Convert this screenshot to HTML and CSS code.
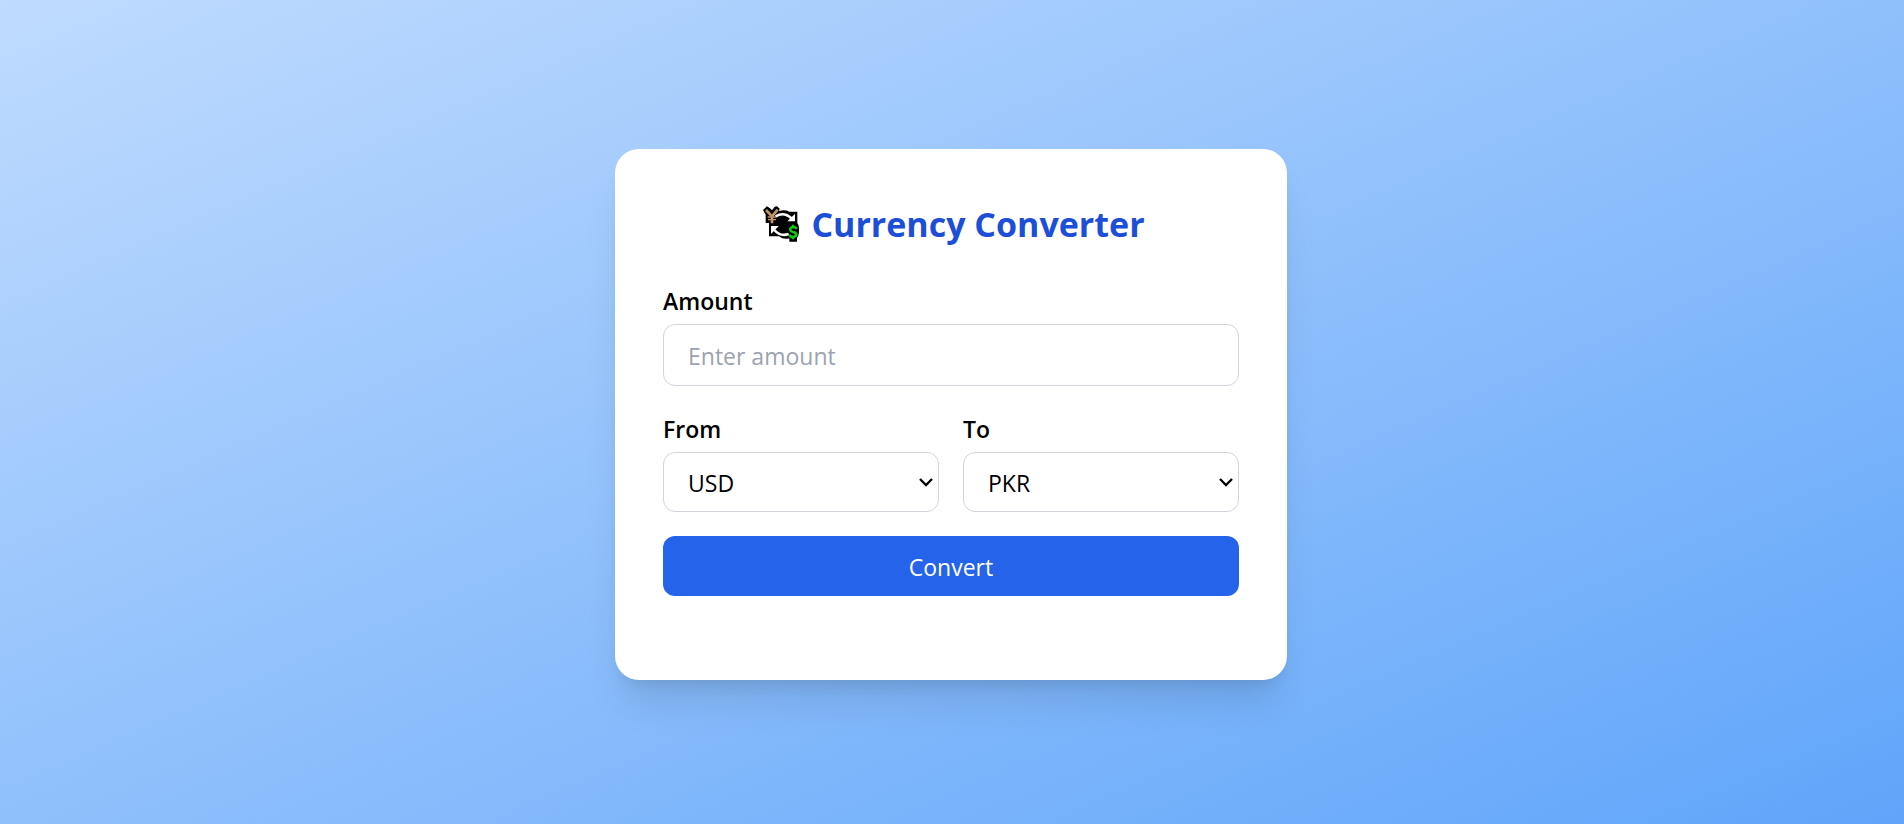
FILE: index.html
```html
<!DOCTYPE html>
<html lang="en">
<head>
<meta charset="utf-8">
<meta name="viewport" content="width=device-width, initial-scale=1">
<title>Currency Converter</title>
<link rel="stylesheet" href="styles.css">
</head>
<body class="page">
<main class="card">
  <header class="card-header">
    <svg class="logo" viewBox="42 46 108 108" aria-hidden="true">
      <path fill="#000" d="M42 58 54 47 62 52 69 59 77 48 84 47 92 54 90 61Q108 56 121 63H145V97Q151 104 150 119 150 135 144 142V153H121V143Q104 148 90 137H60V97H50V72Z"/>
      <path fill="none" stroke="#c1946a" stroke-width="8" d="M51 58 69 77 86 57M69 75V98"/>
      <path fill="none" stroke="#c1946a" stroke-width="4" d="M56 79H82M57 87H81"/>
      <path fill="none" stroke="#fff" stroke-width="8" d="M80 77Q105 62 127 83"/>
      <path fill="#fff" d="M138 69V92H115Z"/>
      <path fill="none" stroke="#fff" stroke-width="8" d="M76 118Q94 139 119 130"/>
      <path fill="#fff" d="M66 106H89L66 130Z"/>
      <path fill="none" stroke="#13c813" stroke-width="8" d="M143 115Q140 109 132 109 123 110 124 117 125 122 132 124 142 126 142 132 140 139 132 139 124 139 121 132"/>
      <path fill="none" stroke="#13c813" stroke-width="7" d="M132 102V110M132 138V146"/>
    </svg>
    <h1 class="title">Currency Converter</h1>
  </header>
  <form class="form">
    <div class="field">
      <label class="label" for="amount">Amount</label>
      <input class="control amount" id="amount" type="text" inputmode="decimal" placeholder="Enter amount">
    </div>
    <div class="row">
      <div class="field">
        <label class="label" for="from">From</label>
        <select class="control select" id="from"><option>USD</option><option>PKR</option></select>
      </div>
      <div class="field">
        <label class="label" for="to">To</label>
        <select class="control select" id="to"><option>PKR</option><option>USD</option></select>
      </div>
    </div>
    <button class="submit" type="button">Convert</button>
  </form>
</main>
</body>
</html>
```
FILE: styles.css
```css
*,
*::before,
*::after {
  box-sizing: border-box;
}

.page {
  margin: 0;
  min-height: 100vh;
  padding: 5px 2px 0 0;
  display: flex;
  align-items: center;
  justify-content: center;
  background: linear-gradient(to bottom right, #bfdbfe, #60a5fa);
  font-family: "Open Sans", "Noto Sans", sans-serif;
  font-size: 23px;
  line-height: 36px;
  color: #000;
}

.card {
  width: 100%;
  max-width: 672px;
  padding: 48px 48px 84px;
  border-radius: 24px;
  background: #fff;
  box-shadow: 0 30px 38px -8px rgba(0, 0, 0, 0.1), 0 12px 15px -9px rgba(0, 0, 0, 0.1);
}

.card-header {
  display: flex;
  align-items: center;
  justify-content: center;
  gap: 12px;
  margin-bottom: 31px;
  padding-left: 6px;
}

.logo {
  width: 36px;
  height: 36px;
}

.title {
  margin: 0;
  font-size: 34px;
  line-height: 54px;
  font-weight: 700;
  color: #1d4ed8;
}

.form {
  display: flex;
  flex-direction: column;
  gap: 24px;
}

.row {
  display: grid;
  grid-template-columns: 1fr 1fr;
  gap: 24px;
}

.field {
  display: flex;
  flex-direction: column;
  gap: 4px;
}

.label {
  line-height: 38px;
  font-weight: 600;
}

.control {
  width: 100%;
  height: 60px;
  padding: 2px 24px 0;
  border: 1px solid #d1d5db;
  border-radius: 12px;
  background-color: #fff;
  color: inherit;
  font: inherit;
}

.select {
  appearance: none;
  background-image: url("data:image/svg+xml,%3Csvg xmlns='http://www.w3.org/2000/svg' width='14' height='10' viewBox='0 0 14 10'%3E%3Cpath d='M1 2 7 8 13 2' fill='none' stroke='black' stroke-width='2.3'/%3E%3C/svg%3E");
  background-repeat: no-repeat;
  background-position: right 5px center;
}

.amount {
  height: 62px;
}

.control::placeholder {
  color: #9ca3af;
  opacity: 1;
}

.submit {
  height: 60px;
  padding: 2px 24px 0;
  border: 0;
  border-radius: 12px;
  background: #2563eb;
  color: #fff;
  font: inherit;
  cursor: pointer;
}
```
